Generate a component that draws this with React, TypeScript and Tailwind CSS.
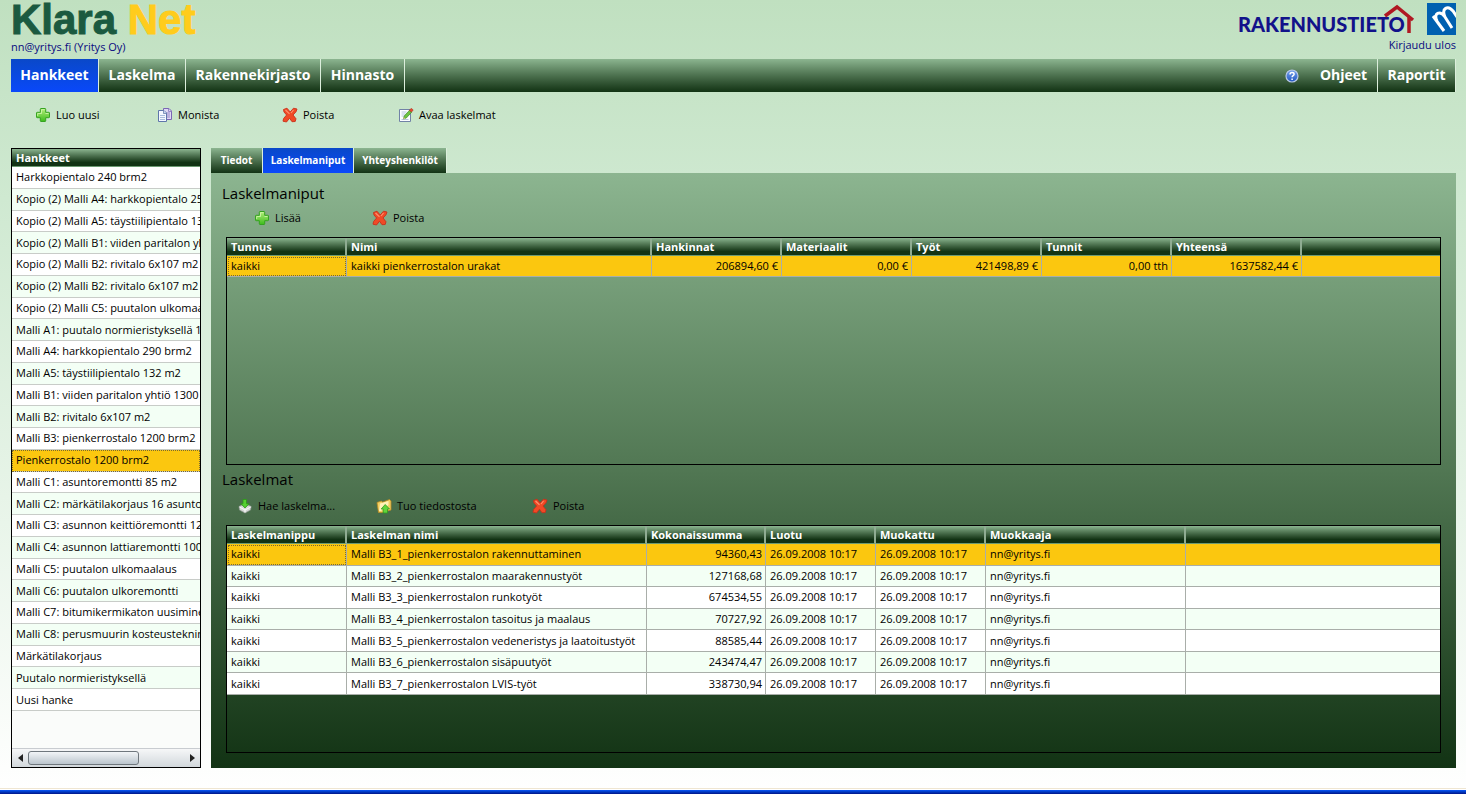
import type { ReactNode } from "react"

const projects = [
  "Harkkopientalo 240 brm2",
  "Kopio (2) Malli A4: harkkopientalo 256 brm2",
  "Kopio (2) Malli A5: täystiilipientalo 132 m2",
  "Kopio (2) Malli B1: viiden paritalon yhtiö",
  "Kopio (2) Malli B2: rivitalo 6x107 m2",
  "Kopio (2) Malli B2: rivitalo 6x107 m2",
  "Kopio (2) Malli C5: puutalon ulkomaalaus",
  "Malli A1: puutalo normieristyksellä 146 m2",
  "Malli A4: harkkopientalo 290 brm2",
  "Malli A5: täystiilipientalo 132 m2",
  "Malli B1: viiden paritalon yhtiö 1300 brm2",
  "Malli B2: rivitalo 6x107 m2",
  "Malli B3: pienkerrostalo 1200 brm2",
  "Pienkerrostalo 1200 brm2",
  "Malli C1: asuntoremontti 85 m2",
  "Malli C2: märkätilakorjaus 16 asuntoa",
  "Malli C3: asunnon keittiöremontti 12 m2",
  "Malli C4: asunnon lattiaremontti 100 m2",
  "Malli C5: puutalon ulkomaalaus",
  "Malli C6: puutalon ulkoremontti",
  "Malli C7: bitumikermikaton uusiminen",
  "Malli C8: perusmuurin kosteustekninen",
  "Märkätilakorjaus",
  "Puutalo normieristyksellä",
  "Uusi hanke",
]

const selectedProject = 13

const bundles = [
  ["kaikki", "kaikki pienkerrostalon urakat", "206894,60 €", "0,00 €", "421498,89 €", "0,00 tth", "1637582,44 €"],
]

const calculations = [
  ["Malli B3_1_pienkerrostalon rakennuttaminen", "94360,43"],
  ["Malli B3_2_pienkerrostalon maarakennustyöt", "127168,68"],
  ["Malli B3_3_pienkerrostalon runkotyöt", "674534,55"],
  ["Malli B3_4_pienkerrostalon tasoitus ja maalaus", "70727,92"],
  ["Malli B3_5_pienkerrostalon vedeneristys ja laatoitustyöt", "88585,44"],
  ["Malli B3_6_pienkerrostalon sisäpuutyöt", "243474,47"],
  ["Malli B3_7_pienkerrostalon LVIS-työt", "338730,94"],
].map(([name, sum]) => ["kaikki", name, sum, "26.09.2008 10:17", "26.09.2008 10:17", "nn@yritys.fi"])

function PlusIcon() {
  return (
    <svg viewBox="0 0 16 16" className="h-4 w-4 shrink-0" aria-hidden="true">
      <defs>
        <linearGradient id="plus" x1="0" y1="0" x2="0" y2="1">
          <stop offset="0" stopColor="#b4ee7c" />
          <stop offset="1" stopColor="#3cbc1c" />
        </linearGradient>
      </defs>
      <path
        d="M6 1.5h4a.7.7 0 0 1 .7.7v3.1h3.1a.7.7 0 0 1 .7.7v4a.7.7 0 0 1-.7.7h-3.1v3.1a.7.7 0 0 1-.7.7H6a.7.7 0 0 1-.7-.7v-3.1H2.2a.7.7 0 0 1-.7-.7V6a.7.7 0 0 1 .7-.7h3.1V2.2a.7.7 0 0 1 .7-.7z"
        fill="url(#plus)"
        stroke="#35a321"
      />
      <path d="M6.5 6.5V2.7h3M2.7 9V6.5h3.8M10.5 6.5h3" fill="none" stroke="#d3f8ae" strokeWidth=".8" />
    </svg>
  )
}

function DeleteIcon() {
  return (
    <svg viewBox="0 0 16 16" className="h-4 w-4 shrink-0" aria-hidden="true">
      <path
        d="M1.5 2.5 5 1.2 8.2 5 11.5 1.2 15 2 14 4.8 11 8l3 3.8-.8 2.7-3.2.2L7.5 11.2 4.5 15 1 14.2l.6-2.7L4.6 8 2 5z"
        fill="#f04a26"
        stroke="#c9301b"
        strokeWidth=".9"
        strokeLinejoin="round"
      />
      <path d="M3.5 3 7.5 6.8M11.5 3 9 6" fill="none" stroke="#ff9470" strokeWidth="1.1" />
    </svg>
  )
}

function CopyIcon() {
  return (
    <svg viewBox="0 0 16 16" className="h-4 w-4 shrink-0" aria-hidden="true">
      <path d="M6.5 1.5H12L14.5 4v8.5h-8z" fill="#ded9f4" stroke="#7a66b4" />
      <path d="M11.5 1.5v3h3M9 6h4M9 8h4M9 10h4" fill="none" stroke="#8f7fc2" strokeWidth=".9" />
      <path d="M1.5 3.5H7L9.5 6v8.5h-8z" fill="#f4f8ff" stroke="#5f76aa" />
      <path d="M6.5 3.5v3h3" fill="#c4d4ee" stroke="#6a7fae" strokeWidth=".8" />
      <path d="M3 8.5h5M3 10.5h5M3 12.5h5" stroke="#a9bddd" />
    </svg>
  )
}

function EditIcon() {
  return (
    <svg viewBox="0 0 16 16" className="h-4 w-4 shrink-0" aria-hidden="true">
      <path d="M1.5 2.5h11v12h-11z" fill="#fbfdff" stroke="#7182a6" />
      <path d="M3.5 5h5M3.5 7h4M3.5 9h3M3.5 12.5h7" stroke="#b8c6df" />
      <path d="M5.5 12l.7-3 5.6-6 2 2-5.500 6z" fill="#6cc441" stroke="#3d8a2b" strokeWidth=".7" />
      <path d="M11.3 3.3 12.8 1.7c.7-.7 2.7 1 2 1.9l-1.400 1.500z" fill="#e8492f" stroke="#a83420" strokeWidth=".6" />
      <path d="M5.3 12.2l.6-2 1.5 1.4z" fill="#e9c58b" />
    </svg>
  )
}

function FetchIcon() {
  return (
    <svg viewBox="0 0 16 16" className="h-4 w-4 shrink-0" aria-hidden="true">
      <path d="M2 8.5 5 7l3 2 3-2 3.2 1.5-.7 3.5L8 15l-5.5-3z" fill="#d5d8d5" stroke="#8f9890" strokeWidth=".7" />
      <path d="M2.5 9 8 12v2.5M8 12l5.8-3" fill="none" stroke="#f8faf8" />
      <path d="M6 1.5h3.5v4.2H12L8 10 4 5.7h2z" fill="#55cf31" stroke="#2c9a18" strokeWidth=".8" />
    </svg>
  )
}

function ImportIcon() {
  return (
    <svg viewBox="0 0 16 16" className="h-4 w-4 shrink-0" aria-hidden="true">
      <path d="M1 4.5 5.5 3l1 1.2 7-2.7L15 3v9l-9 2.5H2.5z" fill="#f2cf63" stroke="#b98b25" strokeWidth=".8" />
      <path d="M4 5.5 12.5 3v4L5 13H3z" fill="#fff2b8" />
      <path d="M9.2 6.5 13.5 11h-2v4H7.200v-4h-2z" fill="#63d43c" stroke="#2f9c1e" strokeWidth=".8" />
    </svg>
  )
}

function HelpIcon() {
  return (
    <svg viewBox="0 0 16 16" className="h-4 w-4 shrink-0" aria-hidden="true">
      <defs>
        <linearGradient id="help" x1="0" y1="0" x2="0" y2="1">
          <stop offset="0" stopColor="#7aa5ee" />
          <stop offset="1" stopColor="#1f55c0" />
        </linearGradient>
      </defs>
      <circle cx="8" cy="8" r="6" fill="url(#help)" stroke="#b9c9e6" strokeWidth="1.2" />
      <path d="M6 6.4c0-2.6 4.1-2.4 4.1-.2 0 1.5-2 1.5-2 3.1M8.100 10.500v1.400" fill="none" stroke="#fff" strokeWidth="1.5" />
    </svg>
  )
}

function RakennustietoLogo() {
  return (
    <svg viewBox="0 0 178 34" className="h-[34px] w-[178px]" role="img" aria-label="Rakennustieto">
      <text x="1" y="29" fontFamily="Lato, sans-serif" fontSize="20" fontWeight="900" fill="#12128a">
        RAKENNUSTIETO
      </text>
      <path d="M148 13 160 4l16 13M172 14v16" fill="none" stroke="#b01822" strokeWidth="3.5" />
    </svg>
  )
}

function SquareLogo() {
  return (
    <svg viewBox="0 0 29 32" className="h-8 w-[29px]" aria-hidden="true">
      <path d="M0 0h29v32H0z" fill="#0060b0" />
      <path
        d="M6 13 17 28M10 18C6 10 13 7 18 14l7 11M18 14C14 5 21 2 26 8l4 6"
        fill="none"
        stroke="#fff"
        strokeWidth="3"
      />
    </svg>
  )
}

function ToolButton({ icon, label, width }: { icon: ReactNode; label: string; width: string }) {
  return (
    <button className={`flex shrink-0 items-center gap-[5px] text-left text-[11px] leading-4 whitespace-nowrap ${width}`}>
      {icon}
      {label}
    </button>
  )
}

const navItem = "flex h-full items-center justify-center border-r border-[#dceedc] pb-0.5"

function MainNav() {
  return (
    <nav className="flex h-[33px] bg-linear-to-b from-[#8cb590] to-[#123314] text-[14px] font-bold text-white">
      <a href="#hankkeet" className={`${navItem} w-[88px] bg-linear-to-b from-[#0a48c8] to-[#0a48fa]`}>Hankkeet</a>
      <a href="#laskelma" className={`${navItem} w-[87px]`}>Laskelma</a>
      <a href="#rakennekirjasto" className={`${navItem} w-[135px]`}>Rakennekirjasto</a>
      <a href="#hinnasto" className={`${navItem} w-[84px]`}>Hinnasto</a>
      <div className="ml-auto flex h-full items-center">
        <HelpIcon />
        <a href="#ohjeet" className={`${navItem} ml-[10px] w-[68px]`}>Ohjeet</a>
        <a href="#raportit" className={`${navItem} w-[78px]`}>Raportit</a>
      </div>
    </nav>
  )
}

const headBg = "bg-linear-to-b from-[#8cb590] via-[#123314] via-75% to-[#123314]"

function ProjectList() {
  return (
    <aside className="flex w-[190px] shrink-0 flex-col border border-black bg-[#fafcfa]">
      <div className="overflow-hidden">
        <table className="h-[562px] w-full table-fixed border-separate border-spacing-0 text-[11px] leading-4">
          <thead>
            <tr className={`h-[18px] ${headBg}`}>
              <th className="border-b border-[#6c9a72] px-1 text-left font-bold text-white">Hankkeet</th>
            </tr>
          </thead>
          <tbody>
            {projects.map((name, i) => (
              <tr
                key={i}
                className={i === selectedProject ? "bg-[#fbc70f]" : i % 2 ? "bg-[#f3fff5]" : "bg-white"}
              >
                <td
                  className={
                    i === selectedProject
                      ? "overflow-hidden border-b border-[#c8ccc8] px-1 whitespace-nowrap outline-1 -outline-offset-1 outline-dotted outline-[#7a6a30]"
                      : "overflow-hidden border-b border-[#c8ccc8] pl-1 whitespace-nowrap"
                  }
                >
                  {name}
                </td>
              </tr>
            ))}
          </tbody>
        </table>
      </div>
      <div className="mt-auto flex h-[19px] items-center border-t border-[#c8ccd0] bg-linear-to-b from-[#f6f7f8] to-[#d2d8dc] px-0.5">
        <button aria-label="Vieritä vasemmalle" className="flex w-3 justify-center">
          <svg viewBox="0 0 5 8" className="h-2 w-[5px]"><path d="M5 0v8L0 4z" fill="#222" /></svg>
        </button>
        <div className="ml-0.5 h-[14px] w-[111px] rounded-[3px] border border-[#6f777d] bg-linear-to-b from-[#f2f5f7] to-[#bcc6ce]" />
        <button aria-label="Vieritä oikealle" className="ml-auto flex w-3 justify-center">
          <svg viewBox="0 0 5 8" className="h-2 w-[5px]"><path d="M0 0v8l5-4z" fill="#222" /></svg>
        </button>
      </div>
    </aside>
  )
}

type Column = { title: string; width: string; right?: boolean }

const bundleColumns: Column[] = [
  { title: "Tunnus", width: "w-[120px]" },
  { title: "Nimi", width: "w-[305px]" },
  { title: "Hankinnat", width: "w-[130px]", right: true },
  { title: "Materiaalit", width: "w-[130px]", right: true },
  { title: "Työt", width: "w-[130px]", right: true },
  { title: "Tunnit", width: "w-[130px]", right: true },
  { title: "Yhteensä", width: "w-[130px]", right: true },
]

const calculationColumns: Column[] = [
  { title: "Laskelmanippu", width: "w-[120px]" },
  { title: "Laskelman nimi", width: "w-[300px]" },
  { title: "Kokonaissumma", width: "w-[119px]", right: true },
  { title: "Luotu", width: "w-[110px]" },
  { title: "Muokattu", width: "w-[110px]" },
  { title: "Muokkaaja", width: "w-[200px]" },
]

function DataGrid({ columns, rows, height }: { columns: Column[]; rows: string[][]; height: string }) {
  return (
    <div className="mx-[15px] min-h-[228px] flex-1 overflow-hidden border border-black">
      <table className={`w-full table-fixed border-separate border-spacing-0 text-[11px] leading-4 ${height}`}>
        <colgroup>
          {columns.map((c) => (
            <col key={c.title} className={c.width} />
          ))}
          <col />
        </colgroup>
        <thead>
          <tr className={`h-[18px] ${headBg}`}>
            {columns.map((c) => (
              <th
                key={c.title}
                className="border-r-2 border-b border-r-[#8fac92] border-b-[#6c9a72] px-1 text-left font-bold whitespace-nowrap text-white"
              >
                {c.title}
              </th>
            ))}
            <td className="border-b border-[#6c9a72]" />
          </tr>
        </thead>
        <tbody>
          {rows.map((row, i) => (
            <tr key={i} className={i === 0 ? "bg-[#fbc70f]" : i % 2 ? "bg-[#f3fff5]" : "bg-white"}>
              {row.map((cell, j) => (
                <td
                  key={j}
                  className={[
                    "border-r border-b border-[#a9aea9] whitespace-nowrap",
                    columns[j].right ? "pr-[3px] text-right" : "pl-1",
                    i === 0 && j === 0 ? "outline-1 -outline-offset-2 outline-dotted outline-[#7a6a30]" : "",
                  ].join(" ")}
                >
                  {cell}
                </td>
              ))}
              <td className="border-b border-[#a9aea9]" />
            </tr>
          ))}
        </tbody>
      </table>
    </div>
  )
}

const tab = "border-r border-[#dceedc] bg-linear-to-b whitespace-nowrap"

export default function App() {
  return (
    <div className="flex min-h-screen flex-col bg-linear-to-b from-[#c0e0c0] via-[#cfe9d1] via-25% to-white font-['Open_Sans','Noto_Sans',sans-serif] text-black">
      <div className="flex flex-1 flex-col pr-[10px] pb-5 pl-[11px]">
        <header className="flex h-[59px] justify-between text-[11px] leading-4 text-[#0a0a80]">
          <div>
            <h1 className="h-[39px] font-['Liberation_Sans',sans-serif] text-[42px] leading-[39px] font-bold text-[#1b5a40] [-webkit-text-stroke:1px]">
              Klara <span className="text-[#ffcc1c]">Net</span>
            </h1>
            <p>nn@yritys.fi (Yritys Oy)</p>
          </div>
          <div className="flex flex-col items-end pt-[3px]">
            <div className="flex h-[34px] gap-3">
              <RakennustietoLogo />
              <SquareLogo />
            </div>
            <a href="#ulos">Kirjaudu ulos</a>
          </div>
        </header>
        <MainNav />
        <div className="flex h-14 items-center px-6 pb-[10px]">
          <ToolButton icon={<PlusIcon />} label="Luo uusi" width="w-[122px]" />
          <ToolButton icon={<CopyIcon />} label="Monista" width="w-[125px]" />
          <ToolButton icon={<DeleteIcon />} label="Poista" width="w-[116px]" />
          <ToolButton icon={<EditIcon />} label="Avaa laskelmat" width="w-[120px]" />
        </div>
        <div className="flex flex-1 gap-[10px]">
          <ProjectList />
          <main className="flex min-w-0 flex-1 flex-col">
            <div role="tablist" className="flex h-[25px] text-[10px] font-bold text-white">
              <button role="tab" className={`${tab} w-[52px] from-[#8cb590] to-[#123314]`}>Tiedot</button>
              <button role="tab" aria-selected="true" className={`${tab} w-[91px] from-[#0a48c8] to-[#0a48fa]`}>
                Laskelmaniput
              </button>
              <button role="tab" className={`${tab} w-[93px] from-[#8cb590] to-[#123314]`}>Yhteyshenkilöt</button>
            </div>
            <div className="flex flex-1 flex-col bg-linear-to-b from-[#8cb590] via-[#517753] via-50% to-[#123314] pb-[15px]">
              <h2 className="px-[11px] pt-2 text-[15px] leading-6">Laskelmaniput</h2>
              <div className="flex h-8 items-center px-[43px] pb-1.5">
                <ToolButton icon={<PlusIcon />} label="Lisää" width="w-[118px]" />
                <ToolButton icon={<DeleteIcon />} label="Poista" width="w-[116px]" />
              </div>
              <DataGrid columns={bundleColumns} rows={bundles} height="h-[39px]" />
              <h2 className="px-[11px] pt-0.5 text-[15px] leading-6">Laskelmat</h2>
              <div className="flex h-[34px] items-center px-[26px] pb-1">
                <ToolButton icon={<FetchIcon />} label="Hae laskelma..." width="w-[139px]" />
                <ToolButton icon={<ImportIcon />} label="Tuo tiedostosta" width="w-[156px]" />
                <ToolButton icon={<DeleteIcon />} label="Poista" width="w-[116px]" />
              </div>
              <DataGrid columns={calculationColumns} rows={calculations} height="h-[169px]" />
            </div>
          </main>
        </div>
      </div>
      <footer className="border-t border-[#efe6d2] bg-white pt-px">
        <div className="h-1 bg-linear-to-b from-[#0a58f8] to-[#001488]" />
      </footer>
    </div>
  )
}
